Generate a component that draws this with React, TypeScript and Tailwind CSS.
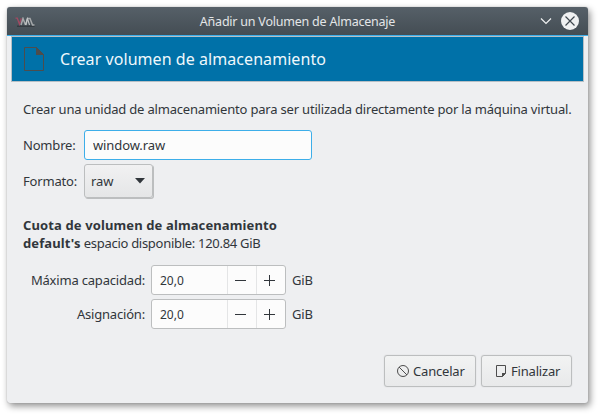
import type { ReactNode } from "react";

function TitleBar() {
  return (
    <header className="grid h-[29px] grid-cols-[1fr_auto_1fr] items-center rounded-t-[3px] border-b border-[#3daee9] bg-linear-to-b from-[#566068] to-[#444d54]">
      <svg className="mt-px ml-[8px] h-[10px] w-[20px]" viewBox="0 0 20 10" fill="none">
        <path d="M2 9.2h17.5" stroke="#30363b" strokeWidth="1.2" />
        <path d="M0.5 1.2h1.8l2.2 6 1.8-6" stroke="#a04a62" strokeWidth="1.3" />
        <path d="M6 8 8 1.5 10.5 8M11 8l1.3-6.5M13 1.5h2L17.5 8h2" stroke="#a5a8aa" strokeWidth="1.5" />
        <path d="M10.5 8 12.5 1.5 14.5 8" stroke="#c3c5c6" strokeWidth="1.1" />
      </svg>
      <h1 className="mt-px text-[12.5px] leading-[18px] tracking-[-0.22px] whitespace-nowrap text-[#e3e5e7]">Añadir un Volumen de Almacenaje</h1>
      <div className="flex items-center justify-end gap-[9px] pr-[9px]">
        <svg className="h-[8px] w-[12px]" viewBox="0 0 12 8" fill="none">
          <path d="M1 1.5 6 6.5 11 1.5" stroke="#eff0f1" strokeWidth="1.2" />
        </svg>
        <svg className="h-[18px] w-[18px]" viewBox="0 0 18 18">
          <circle cx="9" cy="9" r="9" fill="#eff0f1" />
          <path d="m4.5 4.5 9 9m0-9-9 9" stroke="#3f484f" strokeWidth="1.2" />
        </svg>
      </div>
    </header>
  );
}

function Banner() {
  return (
    <div className="mx-[4px] flex h-[46px] items-center border border-[#b7bfc5] bg-[#0071a8] pl-[12px]">
      <svg className="h-[24px] w-[20px]" viewBox="0 0 20 24">
        <path d="M.5.5h12l7 7v16H.5z" fill="none" stroke="#4d4d4d" />
        <path d="M12 0v8h8z" fill="#4d4d4d" />
      </svg>
      <h2 className="ml-[16px] text-[16px] leading-[24px] tracking-[0.06px] whitespace-nowrap text-[#eff8fc]">Crear volumen de almacenamiento</h2>
    </div>
  );
}

function SpinRow({ label, value }: { label: string; value: string }) {
  return (
    <div className="flex h-[30px] items-center">
      <span className="w-[122px] text-right">{label}</span>
      <div className="ml-[6px] flex h-[30px] w-[135px] rounded-[3px] border border-[#bcbebf] bg-[#fcfcfc]">
        <span className="w-[75px] pl-[8px] text-[12px] leading-[29px] tracking-normal">{value}</span>
        <button className="flex w-[29px] items-center justify-center border-l border-[#e4e5e6] pr-[3px]">
          <svg className="h-[11px] w-[11px]" viewBox="0 0 11 11"><path d="M0 5.5h11" stroke="#31363b" /></svg>
        </button>
        <button className="flex w-[29px] items-center justify-center border-l border-[#e4e5e6] pr-[3px]">
          <svg className="h-[11px] w-[11px]" viewBox="0 0 11 11"><path d="M0 5.5h11M5.5 0v11" stroke="#31363b" /></svg>
        </button>
      </div>
      <span className="ml-[6px]">GiB</span>
    </div>
  );
}

function DialogButton({ children, className }: { children: ReactNode; className: string }) {
  return (
    <button className={"flex h-[32px] items-center rounded-[3px] border border-[#bcbebf] bg-linear-to-b from-[#f2f3f3] to-[#e8e9ea] tracking-[-0.19px] shadow-[0_0_1px_#bcbebf] " + className}>
      {children}
    </button>
  );
}

export default function App() {
  return (
    <div className="h-[416px] w-[601px] overflow-hidden bg-white pt-[7px] pl-[7px] font-['Noto_Sans',sans-serif] text-[13px] leading-[18px] tracking-[-0.19px] text-[#31363b]">
      <div className="flex h-[396px] w-[581px] flex-col rounded-[3px] bg-[#eeeff1] shadow-[0_0_1px_#8b8d8f,2px_3px_7px_rgba(0,0,0,0.45)]">
        <TitleBar />
        <Banner />
        <main className="flex flex-1 flex-col pr-[16px] pl-[16px]">
          <p className="mt-[18px] whitespace-nowrap">Crear una unidad de almacenamiento para ser utilizada directamente por la máquina virtual.</p>
          <div className="mt-[12px] flex items-center">
            <label className="w-[61px]">Nombre:</label>
            <input readOnly value="window.raw" className="h-[30px] w-[228px] rounded-[3px] border border-[#3daee9] bg-[#fcfcfc] px-[8px] tracking-[-0.1px] outline-none" />
          </div>
          <div className="mt-[4px] flex items-center">
            <label className="w-[61px]">Formato:</label>
            <button className="flex h-[34px] w-[69px] items-center justify-between rounded-[3px] border border-[#bcbebf] bg-linear-to-b from-[#f1f1f2] to-[#e5e6e7] pr-[7px] pl-[6px] tracking-[-0.1px] shadow-[1px_1px_0_#bcbebf]">
              raw
              <svg className="h-[6px] w-[10px]" viewBox="0 0 10 6"><path d="M0 0h10L5 5.5z" fill="#31363b" /></svg>
            </button>
          </div>
          <p className="mt-[18px] font-bold tracking-[0.12px]">Cuota de volumen de almacenamiento</p>
          <p className="tracking-[-0.29px]"><b className="tracking-[0.12px]">default's</b> espacio disponible: 120.84 GiB</p>
          <div className="mt-[13px] flex flex-col gap-[4px]">
            <SpinRow label="Máxima capacidad:" value="20,0" />
            <SpinRow label="Asignación:" value="20,0" />
          </div>
          <div className="mt-[26px] flex justify-end gap-[5px]">
            <DialogButton className="w-[92px] gap-[4px] pl-[12px]">
              <svg className="h-[12px] w-[12px]" viewBox="0 0 12 12" fill="none" stroke="#4d4d4d">
                <circle cx="6" cy="6" r="5.5" /><path d="m2 2 8 8" />
              </svg>
              Cancelar
            </DialogButton>
            <DialogButton className="w-[91px] gap-[5px] pl-[14px]">
              <svg className="h-[12px] w-[10px]" viewBox="0 0 10 12">
                <path d="M.5.5h9v8l-3 3h-6z" fill="none" stroke="#4d4d4d" /><path d="M6 12V8h4z" fill="#4d4d4d" />
              </svg>
              Finalizar
            </DialogButton>
          </div>
        </main>
      </div>
    </div>
  );
}
